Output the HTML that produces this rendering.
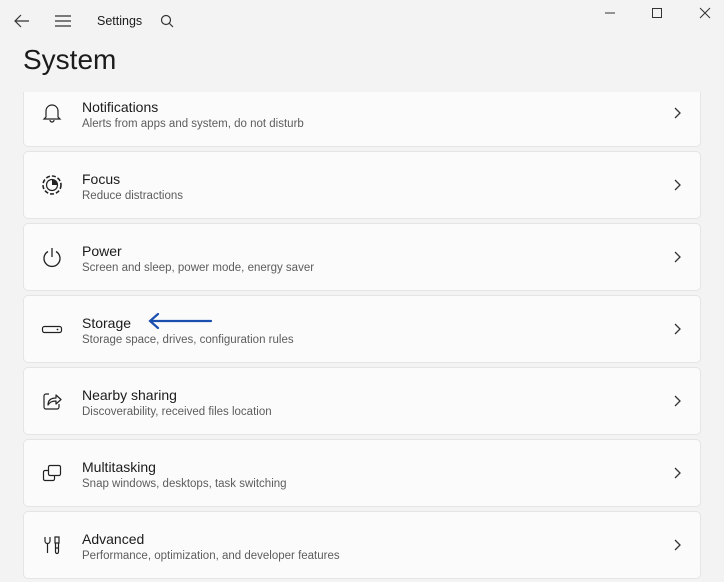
<!DOCTYPE html>
<html><head><style>
body{margin:0;width:724px;height:582px;background:#f3f3f3;font-family:"Liberation Sans",sans-serif;overflow:hidden;position:relative;color:#1b1b1b}
.t{position:absolute}
.card{position:absolute;left:23px;width:676px;height:66px;background:#fbfbfb;border:1px solid #e5e5e5;border-radius:5px}
.card .h{position:absolute;left:58px;top:19px;font-size:14px;color:#1b1b1b}
.card .s{position:absolute;left:58px;top:38px;font-size:11.5px;color:#5d5d5d}
.card svg.i{position:absolute;left:17px;top:22px}
.card svg.c{position:absolute;left:648px;top:27px}
.clip{position:absolute;left:0;top:92px;width:724px;height:490px;overflow:hidden}
</style></head><body>
<svg class="t" style="left:14px;top:14px" width="16" height="14"><path d="M15 7H2M7 1L1 7l6 6" stroke="#333" stroke-width="1.2" fill="none"/></svg>
<svg class="t" style="left:55px;top:15px" width="16" height="12"><path d="M0 1h16M0 6h16M0 11h16" stroke="#333" stroke-width="1.2"/></svg>
<div class="t" style="left:97px;top:14px;font-size:12.5px">Settings</div>
<svg class="t" style="left:160px;top:14px" width="14" height="14"><circle cx="6" cy="6" r="4.5" stroke="#333" stroke-width="1.2" fill="none"/><path d="M9.5 9.5L13 13" stroke="#333" stroke-width="1.2"/></svg>
<svg class="t" style="left:600px;top:6px" width="120" height="14"><path d="M5 7h10" stroke="#333"/><rect x="52.5" y="2.5" width="9" height="9" stroke="#333" fill="none"/><path d="M100 2l10 10M110 2l-10 10" stroke="#333"/></svg>
<div class="t" style="left:23px;top:44px;font-size:28px;font-weight:500">System</div>
<div class="clip">
<div class="card" style="top:-13px"><svg class="i" width="22" height="22"><path d="M5 15V9a6 6 0 0112 0v6l2 2H3z M9 18a2 2 0 004 0" stroke="#222" stroke-width="1.2" fill="none"/></svg><div class="h">Notifications</div><div class="s">Alerts from apps and system, do not disturb</div><svg class="c" width="10" height="12"><path d="M3 1l5 5-5 5" stroke="#333" stroke-width="1.3" fill="none"/></svg></div>
<div class="card" style="top:59px"><svg class="i" width="22" height="22"><circle cx="11" cy="11" r="9" stroke="#222" stroke-width="1.6" stroke-dasharray="4 2" fill="none"/><circle cx="11" cy="11" r="5.5" stroke="#222" stroke-width="1.2" fill="none"/><path d="M11 5.5A5.5 5.5 0 0116.5 11H11z" fill="#222"/></svg><div class="h">Focus</div><div class="s">Reduce distractions</div><svg class="c" width="10" height="12"><path d="M3 1l5 5-5 5" stroke="#333" stroke-width="1.3" fill="none"/></svg></div>
<div class="card" style="top:131px"><svg class="i" width="22" height="22"><path d="M7 5.5A8 8 0 1015 5.5M11 2v9" stroke="#222" stroke-width="1.3" fill="none"/></svg><div class="h">Power</div><div class="s">Screen and sleep, power mode, energy saver</div><svg class="c" width="10" height="12"><path d="M3 1l5 5-5 5" stroke="#333" stroke-width="1.3" fill="none"/></svg></div>
<div class="card" style="top:203px"><svg class="i" width="22" height="22"><rect x="1.5" y="8.5" width="19" height="6" rx="2" stroke="#222" stroke-width="1.2" fill="none"/><circle cx="16.5" cy="11.5" r=".9" fill="#222"/></svg><div class="h">Storage</div><div class="s">Storage space, drives, configuration rules</div><svg class="c" width="10" height="12"><path d="M3 1l5 5-5 5" stroke="#333" stroke-width="1.3" fill="none"/></svg>
<svg style="position:absolute;left:123px;top:17px" width="66" height="16"><path d="M64 8H4M11 1L3 8l8 7" stroke="#1a4fb0" stroke-width="2.2" fill="none" stroke-linecap="round"/></svg></div>
<div class="card" style="top:275px"><svg class="i" width="22" height="22"><path d="M8 4H5a2 2 0 00-2 2v11a2 2 0 002 2h11a2 2 0 002-2v-3M7 15c0-5 3-7 8-7V5l5 4.5-5 4.5v-3c-4 0-6 1-8 4z" stroke="#222" stroke-width="1.2" fill="none" stroke-linejoin="round"/></svg><div class="h">Nearby sharing</div><div class="s">Discoverability, received files location</div><svg class="c" width="10" height="12"><path d="M3 1l5 5-5 5" stroke="#333" stroke-width="1.3" fill="none"/></svg></div>
<div class="card" style="top:347px"><svg class="i" width="22" height="22"><rect x="7.5" y="3.5" width="12" height="10" rx="1.5" stroke="#222" stroke-width="1.2" fill="none"/><path d="M7.5 8.5H4a1.5 1.5 0 00-1.5 1.5v7A1.5 1.5 0 004 18.5h8a1.5 1.5 0 001.5-1.5v-3.5" stroke="#222" stroke-width="1.2" fill="none"/></svg><div class="h">Multitasking</div><div class="s">Snap windows, desktops, task switching</div><svg class="c" width="10" height="12"><path d="M3 1l5 5-5 5" stroke="#333" stroke-width="1.3" fill="none"/></svg></div>
<div class="card" style="top:419px"><svg class="i" width="22" height="22"><path d="M4 3v4a2.5 2.5 0 005 0V3M6.5 9.5V19M14 3h4v6h-4zM14.5 9h3v9a1.5 1.5 0 01-3 0zM14.5 14h3" stroke="#222" stroke-width="1.2" fill="none"/></svg><div class="h">Advanced</div><div class="s">Performance, optimization, and developer features</div><svg class="c" width="10" height="12"><path d="M3 1l5 5-5 5" stroke="#333" stroke-width="1.3" fill="none"/></svg></div>
</div>
</body></html>
